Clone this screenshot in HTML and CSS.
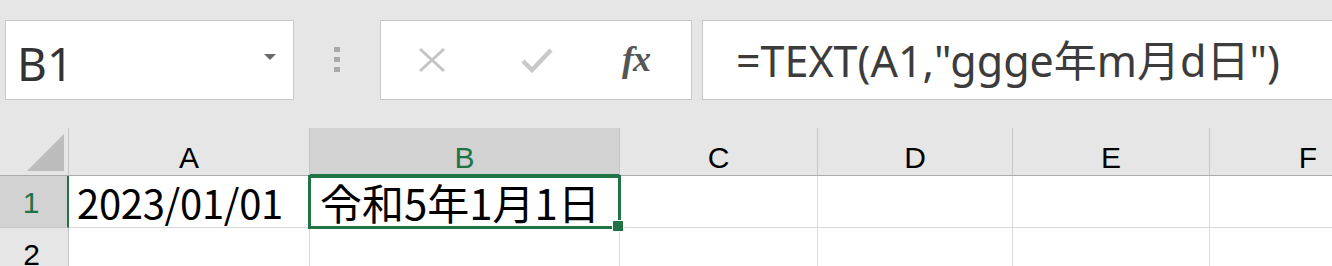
FILE: index.html
```html
<!DOCTYPE html>
<html lang="ja">
<head>
<meta charset="utf-8">
<title>Excel TEXT</title>
<link rel="stylesheet" href="styles.css">
</head>
<body>
<div class="toolbar">
  <div class="namebox">
    <span class="ref">B1</span>
    <span class="caret"></span>
  </div>
  <div class="vdots"><i></i><i></i><i></i></div>
  <div class="fnbox">
    <svg class="ico-x" width="30" height="26" viewBox="0 0 30 26"><path d="M3 2 L27 24 M27 2 L3 24" stroke="#c4c4c4" stroke-width="3" fill="none"/></svg>
    <svg class="ico-check" width="34" height="28" viewBox="0 0 34 28"><path d="M3 14 L12 23 L31 3" stroke="#c9c9c9" stroke-width="4.5" fill="none"/></svg>
    <span class="fx">fx</span>
  </div>
  <div class="formula">=TEXT(A1,"ggge年m月d日")</div>
</div>
<div class="sheet">
  <div class="hd corner"><span class="tri"></span></div>
  <div class="hd col">A</div>
  <div class="hd col sel">B</div>
  <div class="hd col">C</div>
  <div class="hd col">D</div>
  <div class="hd col">E</div>
  <div class="hd col">F</div>

  <div class="hd row sel">1</div>
  <div class="cell a1">2023/01/01</div>
  <div class="cell b1">令和5年1月1日<span class="selbox"></span><span class="handle"></span></div>
  <div class="cell"></div>
  <div class="cell"></div>
  <div class="cell"></div>
  <div class="cell"></div>

  <div class="hd row">2</div>
  <div class="cell"></div>
  <div class="cell"></div>
  <div class="cell"></div>
  <div class="cell"></div>
  <div class="cell"></div>
  <div class="cell"></div>
</div>
</body>
</html>
```
FILE: styles.css
```css
* { box-sizing: border-box; }
html, body { margin: 0; padding: 0; }
body {
  width: 1332px;
  height: 266px;
  overflow: hidden;
  background: #e6e6e6;
  font-family: "Noto Sans", "Noto Sans CJK JP", sans-serif;
}
.toolbar {
  height: 128px;
  display: flex;
  align-items: flex-start;
  padding: 20px 0 0 5px;
}
.namebox {
  width: 289px;
  height: 80px;
  background: #fff;
  border: 1px solid #c8c8c8;
  display: flex;
  align-items: center;
  justify-content: space-between;
  padding: 6px 17px 0 11px;
}
.ref {
  font-size: 46px;
  color: #333;
  line-height: 1;
}
.caret {
  width: 0;
  height: 0;
  border-left: 6px solid transparent;
  border-right: 6px solid transparent;
  border-top: 6px solid #6a6a6a;
  margin-top: -12px;
}
.vdots {
  width: 86px;
  height: 80px;
  display: flex;
  flex-direction: column;
  align-items: center;
  justify-content: center;
  gap: 5px;
  padding-bottom: 1px;
}
.vdots i {
  display: block;
  width: 6px;
  height: 5px;
  background: #a9a9a9;
}
.fnbox {
  width: 312px;
  height: 80px;
  background: #fff;
  border: 1px solid #c8c8c8;
  display: flex;
  align-items: center;
  padding: 0 0 0 36px;
}
.ico-check { margin-left: 73px; margin-top: 1px; }
.fx {
  margin-left: 68px;
  font-family: "Liberation Serif", serif;
  font-style: italic;
  font-weight: bold;
  font-size: 36px;
  color: #555;
  letter-spacing: -1px;
  margin-top: -2px;
}
.formula {
  flex: 1;
  margin-left: 10px;
  margin-right: -2px;
  height: 80px;
  background: #fff;
  border: 1px solid #c8c8c8;
  display: flex;
  align-items: center;
  padding: 0 0 3px 33px;
  font-size: 43px;
  color: #3c3c3c;
  white-space: nowrap;
}
.sheet {
  display: grid;
  grid-template-columns: 69px 241px 310px 198px 195px 197px 197px;
  grid-template-rows: 48px 52px 52px;
  width: 1407px;
}
.hd {
  background: #e6e6e6;
  border-right: 1px solid #c6c6c6;
  border-bottom: 1px solid #ababab;
  font-family: "Liberation Sans", "Noto Sans CJK JP", sans-serif;
  font-size: 30px;
  line-height: 30px;
  color: #000;
  display: flex;
  justify-content: center;
  align-items: center;
}
.col { padding-top: 13px; }
.corner {
  justify-content: flex-end;
  align-items: flex-end;
  padding: 0 4px 4px 0;
}
.tri {
  display: block;
  width: 37px;
  height: 37px;
  background: #bcbcbc;
  clip-path: polygon(100% 0, 100% 100%, 0 100%);
}
.col.sel {
  background: #d2d2d2;
  color: #217346;
  border-bottom: 2px solid #217346;
}
.row {
  border-bottom: 1px solid #c6c6c6;
  padding: 2px 5px 0 0;
}
.row.sel {
  background: #d2d2d2;
  color: #217346;
  border-right: 2px solid #217346;
}
.cell {
  background: #fff;
  border-right: 1px solid #d9d9d9;
  border-bottom: 1px solid #d9d9d9;
  display: flex;
  align-items: center;
  font-family: "Noto Sans CJK JP", sans-serif;
  color: #000;
  white-space: nowrap;
}
.a1 {
  font-size: 40px;
  letter-spacing: -0.3px;
  padding-left: 8px;
}
.b1 {
  position: relative;
  font-size: 42px;
  padding-left: 10px;
}
.selbox {
  position: absolute;
  top: -1px;
  left: -2px;
  right: -2px;
  bottom: -2px;
  border: 3px solid #217346;
}
.handle {
  position: absolute;
  right: -5px;
  bottom: -5px;
  width: 12px;
  height: 12px;
  background: #217346;
  border: 1px solid #fff;
}
```
